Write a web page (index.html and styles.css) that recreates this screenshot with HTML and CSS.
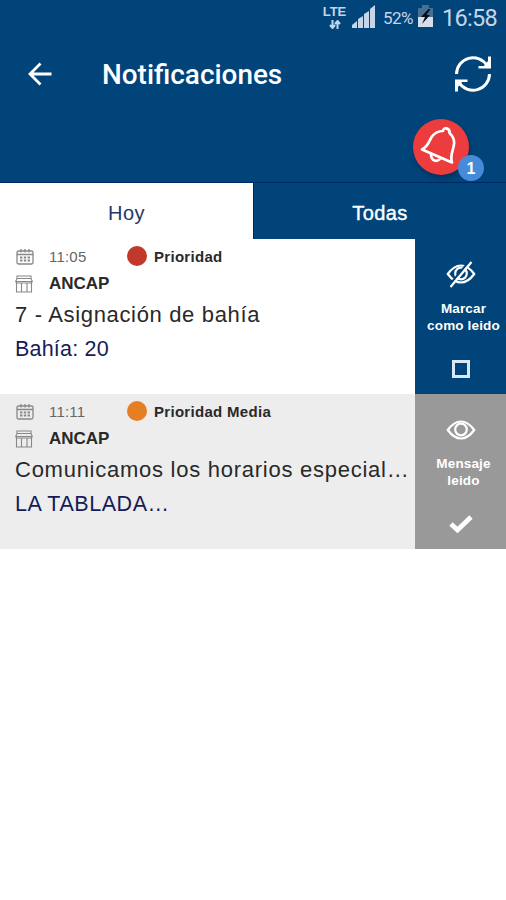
FILE: index.html
```html
<!DOCTYPE html>
<html lang="es">
<head>
<meta charset="utf-8">
<title>Notificaciones</title>
<link rel="stylesheet" href="styles.css">
</head>
<body>
<svg class="defs" width="0" height="0">
  <symbol id="calendar" viewBox="0 0 18 17">
    <g fill="none" stroke="currentColor" stroke-width="1.3">
      <rect x="1" y="3" width="16" height="13" rx="1.5"/>
      <path d="M1 6.500h16M5 1v3.500M9 1v3.500M13 1v3.500"/>
      <path d="M4 9.500h10M4 12.500h10" stroke-width="2" stroke-dasharray="2.400 1.400"/>
    </g>
  </symbol>
  <symbol id="store" viewBox="0 0 18 18">
    <path d="M2 1h14v2.500H2zM2 3.500L.7 6.500h16.600L16 3.500M1.500 7v10h15V7M6.500 17V8.500M12 17V8.500M.7 8h16.600" fill="none" stroke="currentColor" stroke-width="1.100"/>
  </symbol>
  <symbol id="eye" viewBox="0 0 30 28">
    <g fill="none" stroke="currentColor" stroke-width="2.200">
      <path d="M1.800 14Q8 5.500 15 5.500T28.200 14Q22 22.500 15 22.500T1.800 14z"/>
      <circle cx="15" cy="13.500" r="5.800"/>
    </g>
  </symbol>
</svg>
<header class="header">
  <div class="status">
    <div class="lte"><span>LTE</span>
      <svg width="12" height="9" viewBox="0 0 12 9"><path d="M3.500 0v7M1 5l2.500 3L6 5M8.500 9V2M6 4l2.500-3L11 4" fill="none" stroke="currentColor" stroke-width="2"/></svg>
    </div>
    <svg class="signal" width="24" height="23" viewBox="0 0 24 23"><path d="M0 23v-3l5-4v7zM6 23v-9l5-3v12zM12 23V9l5-3v17zM18 23V4l5-4v23z" fill="currentColor"/></svg>
    <span class="percent">52%</span>
    <svg class="battery" width="15" height="22" viewBox="0 0 15 22"><path d="M4 0h7v3h4v19H0V3h4z" fill="#456f94"/><path d="M0 12h15v10H0z" fill="#d6dfe9"/><path d="M10.500 4L3 12h4L4 19l8-9H8.500l4-6z" fill="#080b10"/></svg>
    <span class="clock">16:58</span>
  </div>
  <div class="titlebar">
    <svg class="back" width="24" height="24" viewBox="0 0 24 24"><path d="M23.500 12H2M12.500 1.500L2 12l10.500 10.500" fill="none" stroke="currentColor" stroke-width="2.800"/></svg>
    <h1 class="title">Notificaciones</h1>
    <svg class="refresh" width="38" height="38" viewBox="0 0 38 38"><g fill="none" stroke="currentColor" stroke-width="3"><path d="M2.500 19A16.500 16.500 0 0 1 33 10.500M35.500 19A16.500 16.500 0 0 1 5 27.500"/></g><path d="M37 1.500V13.500H24.500V11H30L34 6V1.500zM1 36.500V24.500H13.500V27H8L4 32V36.500z" fill="currentColor"/></svg>
  </div>
  <div class="alerts">
    <div class="bell">
      <svg width="56" height="56" viewBox="0 0 56 56"><g fill="none" stroke="#fff" stroke-width="2.700" stroke-linejoin="round" stroke-linecap="round"><path d="M9 30.500C15 28 16 22 19 17.500C22 13.500 26 12 30 12C30 8 37 8.500 36.500 14C41 18 42 23 40.500 28C39 34 37 38 39 43.500Z"/><path d="M18 35c0 7 6 9 10 4"/></g></svg>
      <span class="badge">1</span>
    </div>
  </div>
</header>
<nav class="tabs">
  <div class="tab active"><span class="hoy">Hoy</span></div>
  <div class="tab"><span class="todas">Todas</span></div>
</nav>
<main>
  <article class="row">
    <div class="content">
      <div class="meta"><svg class="icon" width="18" height="17"><use href="#calendar"/></svg><span class="time">11:05</span><i class="dot red"></i><b class="priority">Prioridad</b></div>
      <div class="company"><svg class="icon" width="18" height="18"><use href="#store"/></svg><b>ANCAP</b></div>
      <div class="subject asign">7 - Asignación de bahía</div>
      <div class="detail bahia">Bahía: 20</div>
    </div>
    <aside class="action">
      <svg class="eye" width="30" height="28"><use href="#eye"/><path d="M3 25.500L23.500 1" stroke="#004479" stroke-width="2"/><path d="M4.500 27L25.500 2" stroke="currentColor" stroke-width="2.200"/></svg>
      <div class="label">Marcar<br>como leido</div>
      <div class="state"><i class="box"></i></div>
    </aside>
  </article>
  <article class="row read">
    <div class="content">
      <div class="meta"><svg class="icon" width="18" height="17"><use href="#calendar"/></svg><span class="time">11:11</span><i class="dot orange"></i><b class="priority media">Prioridad Media</b></div>
      <div class="company"><svg class="icon" width="18" height="18"><use href="#store"/></svg><b>ANCAP</b></div>
      <div class="subject comm">Comunicamos los horarios especial…</div>
      <div class="detail tablada">LA TABLADA…</div>
    </div>
    <aside class="action">
      <svg class="eye" width="30" height="28"><use href="#eye"/></svg>
      <div class="label">Mensaje<br>leido</div>
      <div class="state"><svg width="24" height="18" viewBox="0 0 24 18"><path d="M2 9l6.500 6L22 2" fill="none" stroke="currentColor" stroke-width="4.800"/></svg></div>
    </aside>
  </article>
</main>
</body>
</html>
```
FILE: styles.css
```css
* { box-sizing: border-box; }
body { margin: 0; background: #fff; font-family: "Liberation Sans", Arial, sans-serif; }
svg { display: block; flex: none; }
.defs { position: absolute; }
.header { height: 182px; background: #004479; color: #fff; }
.status { height: 36px; padding: 5px 9px 0 0; display: flex; justify-content: flex-end; color: #c5d5e8; font-family: Roboto, sans-serif; }
.lte { width: 25px; display: flex; flex-direction: column; align-items: center; font: 700 13px/13px "Liberation Sans", sans-serif; }
.lte svg { margin-top: 2px; }
.signal { margin: 0 7px 0 5px; }
.percent { width: 32px; font-size: 17px; line-height: 26px; letter-spacing: -.6px; }
.battery { margin: 0 9px 0 3px; }
.clock { width: 55px; font-size: 23.500px; line-height: 27px; letter-spacing: -.7px; }
.titlebar { height: 76px; display: flex; align-items: center; padding: 0 14px 0 28px; }
.title { margin: 2px auto 0 50px; font: 500 27.900px/36px Roboto, sans-serif; }
.refresh { width: 38px; }
.alerts { display: flex; justify-content: flex-end; padding: 7px 37px 0 0; }
.bell { position: relative; width: 56px; height: 56px; border-radius: 50%; background: #ed3c3d; box-shadow: 1px 3px 5px #001f4480; }
.badge { position: absolute; left: 45px; top: 36px; width: 26px; height: 26px; border-radius: 50%; background: #458bda; text-align: center; font: 700 16px/27px "Liberation Sans", sans-serif; }
.tabs { height: 57px; display: grid; grid-template-columns: 254px 1fr; background: #004479; color: #fff; font-size: 20px; border-top: 1px solid #002765; }
.tab { display: flex; align-items: center; justify-content: center; padding-top: 5px; }
.active { background: #fff; color: #233669; border-right: 1px solid #002765; }
.hoy { letter-spacing: .5px; }
.todas { letter-spacing: .4px; -webkit-text-stroke: .4px #fff; }
.row { display: grid; grid-template-columns: 415px 1fr; height: 155px; background: #fff; }
.read { background: #ededed; }
.content { padding: 7px 0 0 15px; min-width: 0; color: #292929; }
.meta { display: flex; align-items: center; height: 20px; font-size: 15px; }
.icon { color: #888; margin-left: 1px; }
.time { margin-left: 15px; width: 78px; color: #666; letter-spacing: .2px; }
.dot { width: 20px; height: 20px; border-radius: 50%; margin-right: 7px; }
.red { background: #c0392b; }
.orange { background: #e67e22; }
.priority { letter-spacing: .3px; }
.company { display: flex; align-items: center; height: 35px; font-size: 17px; }
.company b { margin-left: 16px; }
.company .icon { margin-left: 0; }
.subject { height: 28px; font-size: 22px; line-height: 28px; white-space: nowrap; }
.asign { letter-spacing: .66px; }
.comm { letter-spacing: .74px; }
.detail { margin-top: 6px; font-size: 21.500px; line-height: 28px; color: #171b56; white-space: nowrap; }
.bahia { letter-spacing: .2px; }
.tablada { letter-spacing: .55px; }
.action { display: flex; flex-direction: column; align-items: center; padding-top: 21px; background: #004479; color: #fff; }
.read .action { background: #999; padding-top: 22px; }
.label { margin-top: 12px; padding-left: 6px; text-align: center; font-size: 13.500px; line-height: 17px; font-weight: 700; white-space: nowrap; letter-spacing: .15px; }
.read .label { margin-top: 11px; }
.state { display: flex; justify-content: center; align-items: center; margin-top: 25px; height: 20px; }
.box { width: 18px; height: 18px; border: 3px solid #d9e9f8; }
```
